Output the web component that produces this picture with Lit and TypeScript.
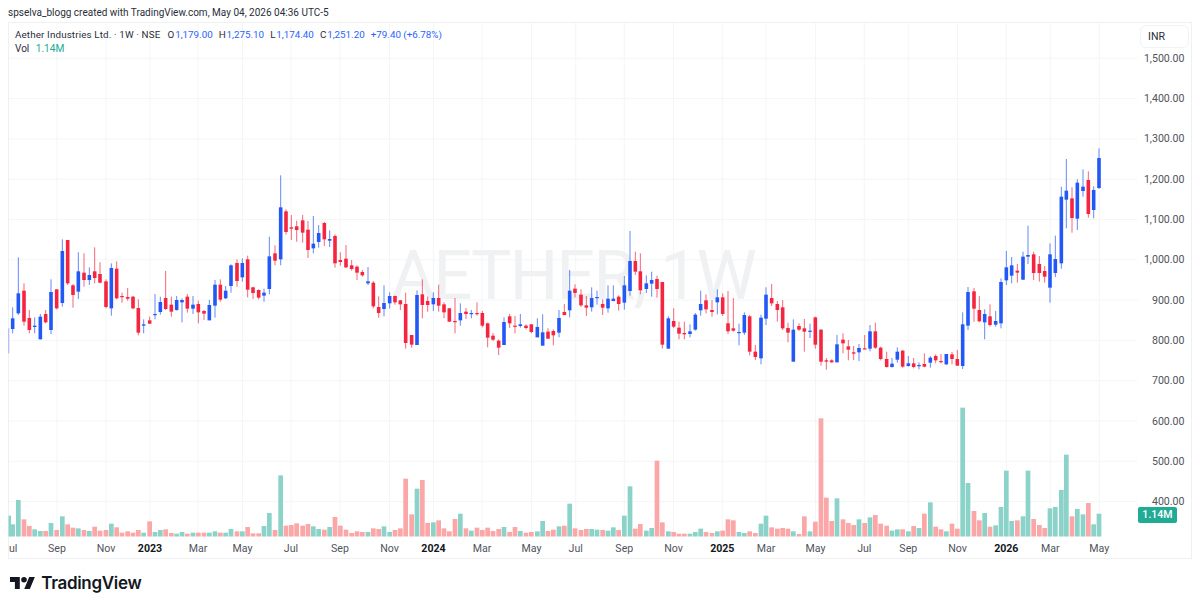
import { LitElement, html, css, svg } from "lit";
import { customElement } from "lit/decorators.js";

// rows: zoomX, high, bodyTop, bodyBottom, low, up(1)/down(0), volumeTop
type Seg = { x0: number; y0: number; vy0: number; rows: number[][] };
const SEGS: Seg[] = [
  { x0: 0, y0: 170, vy0: 470, rows: [
    [26,475,512,512,550,1,137],[38,412,445,477,490,1,163],[55,262,370,430,435,1,90],[72,340,362,455,467,0,148],[88,420,444,480,490,0,168],[104,442,467,471,490,1,178],[121,432,440,508,508,1,183],[137,420,432,457,460,0,183],[153,328,366,480,492,1,159],[170,358,358,415,418,0,180],[187,208,243,399,410,1,139],[203,210,210,340,345,0,163],[219,342,346,375,413,0,173],[235,247,304,365,387,1,175],[252,250,308,330,350,0,180],[268,292,315,330,345,1,183],[284,232,304,324,340,0,170],[300,277,312,338,340,0,182],[318,328,334,411,415,0,180],[334,280,294,415,437,1,161],[350,274,296,385,388,0,172],[366,368,378,381,398,0,188],[383,354,381,386,392,0,184],[399,378,380,415,418,0,188],[415,388,414,488,496,0,180],[431,448,463,467,490,1,188],[449,440,451,461,462,0,154],[465,372,432,435,448,1,186],[481,380,396,426,434,1,180],[497,303,384,417,420,0,178],[514,380,404,425,440,0,189],[530,378,390,420,422,1,191],[546,385,390,397,457,1,186],[562,372,380,416,428,0,191],[579,378,404,416,432,1,188],[595,392,402,427,460,0,188],[612,420,423,431,450,0,188],[628,390,405,451,451,1,188],[645,330,344,407,443,1,184],[661,328,344,389,395,0,188],[677,348,362,385,387,1,188],[693,283,286,348,368,1,177],[711,268,279,333,350,0,184],[727,265,279,322,335,1,184],[743,257,268,359,382,0,171],[759,350,352,369,387,0,190],[776,358,360,383,388,0,190],[792,356,368,377,395,1,168],[808,200,259,357,373,1,129],[825,226,250,272,286,0,180],[842,16,112,268,286,1,16],[858,118,124,186,194,0,167],[874,135,172,176,210,0,165],[890,152,169,180,215,0,160],
  ]},
  { x0: 300, y0: 170, vy0: 470, rows: [
    [8,135,151,188,218,0,167],[24,153,179,240,264,0,162],[40,138,221,235,250,1,169],[56,165,189,216,233,1,177],[73,156,159,208,228,0,179],[89,181,207,212,231,1,171],[105,193,198,280,293,0,141],[121,247,270,276,287,0,167],[138,225,266,292,294,0,179],[155,270,286,297,302,0,189],[171,286,290,308,330,0,184],[187,300,306,316,320,0,186],[204,291,334,340,345,1,186],[220,333,338,409,415,0,175],[236,379,411,429,443,0,177],[252,346,399,417,439,1,169],[269,367,378,400,416,1,186],[285,377,378,397,404,0,180],[301,390,391,403,420,0,175],[317,368,402,519,536,0,26],[335,495,495,524,533,0,133],[351,361,375,525,525,1,56],[367,328,373,405,445,0,30],[383,380,393,405,425,0,159],[400,367,384,403,423,1,157],[416,344,384,407,425,0,151],[432,397,403,427,445,0,175],[448,414,415,455,456,0,184],[465,384,453,456,490,0,147],[481,400,429,451,467,1,131],[498,414,425,432,447,0,175],[514,420,429,431,445,1,182],[531,397,429,431,437,0,173],[547,423,429,467,472,0,180],[563,458,460,503,532,0,173],[579,489,497,509,513,0,183],[596,508,512,533,555,0,177],[612,442,456,525,525,1,171],[629,432,439,460,474,0,186],[645,438,467,470,490,0,171],[661,432,463,468,473,1,183],[678,463,467,474,478,0,188],[694,462,463,486,490,0,186],[712,445,471,502,502,1,184],[728,433,487,527,527,1,153],[744,475,485,506,507,0,183],[760,478,483,496,526,0,179],[777,420,444,488,502,1,169],[793,402,426,435,436,0,167],[809,300,362,421,442,1,101],[825,343,356,369,382,0,175],[843,358,374,406,411,0,180],[859,378,406,413,438,0,177],[875,352,384,412,425,1,177],[891,362,381,383,404,1,179],
  ]},
  { x0: 600, y0: 220, vy0: 400, rows: [
    [8,238,252,263,285,0,390],[24,196,236,265,278,1,392],[40,196,236,243,244,1,382],[56,226,230,252,272,0,390],[73,168,196,248,269,1,347],[90,33,123,213,227,1,259],[106,95,123,155,165,0,386],[121,100,154,211,223,0,372],[139,166,190,207,219,1,392],[155,155,180,191,230,1,384],[171,167,177,207,233,0,182],[187,186,186,374,386,0,367],[205,289,295,386,386,1,394],[221,265,303,320,324,0,396],[237,305,323,341,358,0,401],[253,305,339,343,358,0,401],[270,313,334,342,352,1,401],[286,279,284,329,332,1,396],[302,212,252,271,287,1,386],[318,223,241,268,280,0,396],[336,240,270,276,290,0,399],[352,208,232,247,283,1,394],[368,220,232,282,288,0,392],[384,213,310,334,342,0,358],[400,234,325,332,335,0,361],[417,311,336,338,376,1,396],[433,277,285,338,345,1,399],[449,285,289,395,406,0,394],[466,375,395,411,420,0,399],[483,284,293,415,433,1,371],[498,202,224,296,315,1,347],[515,192,234,250,258,0,382],[532,243,252,270,305,0,386],[548,240,262,325,330,0,384],[564,308,324,338,367,0,386],[580,298,329,425,425,1,394],[597,310,318,329,333,0,402],[613,297,325,335,395,0,349],[630,311,332,335,354,1,394],[646,290,292,374,386,0,365],[663,328,329,425,437,0,55],[679,414,421,425,449,0,293],[695,418,421,427,428,0,363],[711,345,373,427,427,1,295],[729,340,359,370,400,0,358],[745,360,379,389,421,0,369],[761,378,397,401,420,0,375],[777,372,384,397,423,1,358],[794,345,385,387,388,0,369],[810,315,334,386,394,1,352],[826,308,334,383,387,0,345],[842,380,383,417,421,0,371],[860,395,417,441,443,0,377],[876,414,431,441,443,1,392],[892,382,395,419,428,1,388],
  ]},
  { x0: 900, y0: 140, vy0: 400, rows: [
    [8,630,632,680,683,0,388],[25,648,670,678,680,1,394],[41,654,670,681,685,0,378],[57,667,675,678,688,1,384],[73,640,672,680,682,0,341],[91,648,653,668,683,1,307],[107,643,648,661,670,0,380],[123,642,663,666,670,0,388],[139,642,642,673,675,1,394],[156,636,643,657,673,0,371],[172,630,657,677,678,0,386],[188,517,553,678,687,1,23],[204,441,456,557,570,1,249],[222,444,454,506,545,0,333],[238,468,510,544,547,0,361],[254,508,522,547,598,1,339],[270,493,529,555,560,0,380],[287,513,543,554,560,1,376],[303,415,426,550,565,1,321],[319,333,382,421,435,1,212],[335,351,376,407,430,1,363],[352,372,392,398,428,0,361],[369,335,350,419,420,1,349],[384,257,345,350,372,1,212],[401,335,343,399,420,0,357],[418,348,372,399,425,0,375],[434,378,393,410,428,0,384],[450,310,343,443,488,1,325],[466,287,357,399,411,1,321],[484,140,170,370,386,1,270],[499,57,152,179,265,1,164],[516,142,175,234,278,0,349],[532,118,128,236,270,1,327],[549,88,140,153,170,1,343],[565,94,120,222,233,0,309],[581,139,150,210,235,1,373],[597,25,54,144,147,1,341],
  ]},
];

const BASE = 536.5;
const PRICES = ["1,500.00","1,400.00","1,300.00","1,200.00","1,100.00","1,000.00","900.00","800.00","700.00","600.00","500.00","400.00"];
const TIME: [number, string, boolean][] = [[57,"Sep",false],[106,"Nov",false],[150,"2023",true],[198,"Mar",false],[242.5,"May",false],[291,"Jul",false],[340,"Sep",false],[389.5,"Nov",false],[433.5,"2024",true],[482,"Mar",false],[531.5,"May",false],[575.7,"Jul",false],[624.3,"Sep",false],[673.5,"Nov",false],[722.3,"2025",true],[766,"Mar",false],[815.5,"May",false],[864.3,"Jul",false],[908.3,"Sep",false],[957.5,"Nov",false],[1006.3,"2026",true],[1050.3,"Mar",false],[1099.3,"May",false]];

@customElement("app-root")
export class AppRoot extends LitElement {
  static styles = css`
    :host { display: block; width: 1200px; height: 609px; background: #fff; overflow: hidden; font-family: Roboto, "Noto Sans", sans-serif; color: #131722; }
    .byline { height: 22px; padding-left: 8px; font-size: 10px; line-height: 26px; color: #2a2e39; white-space: nowrap; box-sizing: border-box; }
    .frame { position: relative; margin-left: 8px; width: 1184px; height: 537px; border: 1px solid #eef0f3; box-sizing: border-box; }
    .plot { position: absolute; inset: -1px; display: block; }
    .grid { stroke: #f4f5f7; stroke-width: 1; }
    .watermark { font-family: Roboto, sans-serif; font-size: 68px; fill: #eff1f3; letter-spacing: -1.8px; }
    .blue { fill: #2258f6; }
    .red { fill: #f5253f; }
    .wick { fill-opacity: 0.7; }
    .vteal { fill: #8bd2c9; }
    .vred { fill: #fba7a7; }
    .price { font-size: 10.6px; fill: #50535e; text-anchor: end; dominant-baseline: central; }
    .time { font-size: 10.6px; fill: #50535e; text-anchor: middle; dominant-baseline: central; }
    .time.year { font-weight: 700; fill: #131722; }
    .edge { text-anchor: start; }
    .legend { position: absolute; left: 6px; top: 5px; font-size: 9.8px; line-height: 14px; color: #2a2e39; }
    .row { display: flex; align-items: baseline; white-space: nowrap; }
    .title { width: 152.6px; letter-spacing: 0.14px; }
    .ohlc { margin-right: 6.1px; }
    .num { color: #2962ff; margin-left: 0.8px; }
    .chg { color: #2962ff; }
    .vol { margin-right: 6.4px; font-size: 10px; }
    .teal { color: #22ab94; font-size: 10.2px; }
    .inr { position: absolute; right: 2px; top: 2px; width: 49px; height: 23px; box-sizing: border-box; border: 1px solid #f0f3fa; border-radius: 6px; font-size: 10.6px; line-height: 21px; padding-left: 7px; color: #2a2e39; background: #fff; }
    .tag { position: absolute; left: 1129px; top: 484px; width: 39px; height: 16px; background: #22ab94; border-radius: 2px; color: #fff; font-size: 10.6px; font-weight: 500; line-height: 16px; text-align: center; }
    .foot { display: flex; align-items: center; gap: 6px; padding: 14px 0 0 10px; }
    .mark { width: 25.2px; height: 12.6px; fill: #131722; display: block; }
    .brand { font-family: Inter, sans-serif; font-size: 17px; font-weight: 600; line-height: 20px; letter-spacing: -0.3px; color: #131722; }
  `;

  private chart() {
    const bars = SEGS.flatMap((s) => s.rows.map((r) => {
      const x = s.x0 + r[0] / 3;
      const [hi, top, bot, lo] = [r[1], r[2], r[3], r[4]].map((v) => s.y0 + v / 3);
      const vt = s.vy0 + r[6] / 3;
      const bh = bot - top;
      const c = r[5] ? "blue" : "red";
      return svg`
        <rect class=${r[5] ? "vteal" : "vred"} x=${x - 2.35} y=${vt} width="4.7" height=${BASE - vt}></rect>
        <rect class="${c} wick" x=${x - 0.5} y=${hi} width="1" height=${lo - hi}></rect>
        ${bh > 0 ? svg`<rect class=${c} x=${x - 1.8} y=${top} width="3.6" height=${Math.max(bh, 1.2)}></rect>` : ""}
      `;
    }));
    return html`<svg class="plot" viewBox="8 22 1184 537" width="1184" height="537">
      <defs><clipPath id="pane"><rect x="8.5" y="22" width="1128" height="516"></rect></clipPath></defs>
      ${TIME.map(([x]) => svg`<line class="grid" x1=${x} x2=${x} y1="23" y2="538"></line>`)}
      ${PRICES.map((_, i) => svg`<line class="grid" x1="9" x2="1137" y1=${58.3 + i * 40.3} y2=${58.3 + i * 40.3}></line>`)}
      <text class="watermark" x="391" y="299">AETHER, 1W</text>
      <g clip-path="url(#pane)">${bars}</g>
      ${PRICES.map((p, i) => svg`<text class="price" x="1184.5" y=${58.3 + i * 40.3}>${p}</text>`)}
      <text class="time edge" x="9" y="548">ul</text>
      ${TIME.map(([x, t, y]) => svg`<text class="time ${y ? "year" : ""}" x=${x} y="548">${t}</text>`)}
    </svg>`;
  }

  render() {
    return html`
      <div class="byline">spselva_blogg created with TradingView.com, May 04, 2026 04:36 UTC-5</div>
      <div class="frame">
        ${this.chart()}
        <div class="legend">
          <div class="row">
            <span class="title">Aether Industries Ltd. · 1W · NSE</span>
            <span class="ohlc">O<span class="num">1,179.00</span></span>
            <span class="ohlc">H<span class="num">1,275.10</span></span>
            <span class="ohlc">L<span class="num">1,174.40</span></span>
            <span class="ohlc">C<span class="num">1,251.20</span></span>
            <span class="chg">+79.40 (+6.78%)</span>
          </div>
          <div class="row"><span class="vol">Vol</span><span class="teal">1.14M</span></div>
        </div>
        <div class="inr">INR</div>
        <div class="tag">1.14M</div>
      </div>
      <div class="foot">
        <svg class="mark" viewBox="0 4 36 18"><path d="M14 22H7V11H0V4h14v18zM28 22h-8l7.5-18h8L28 22z"></path><circle cx="20" cy="8" r="4"></circle></svg>
        <span class="brand">TradingView</span>
      </div>
    `;
  }
}
